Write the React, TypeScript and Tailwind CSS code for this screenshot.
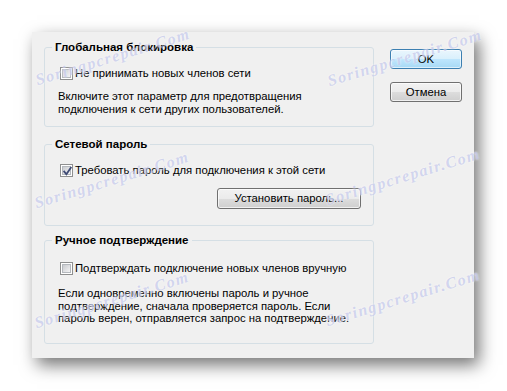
import React from "react";

const font = { fontFamily: '"Liberation Sans", Arial, sans-serif' };

function Checkbox({ checked }: { checked?: boolean }) {
  return (
    <div className="relative w-[13px] h-[13px] shrink-0 border border-[#8e8f8f] bg-white p-[1px]">
      <div className="w-full h-full bg-gradient-to-br from-[#c9cbcf] to-[#f4f4f5] border border-[#b4b8bd]" />
      {checked && (
        <svg className="absolute left-[1px] top-[1px]" width="11" height="11" viewBox="0 0 11 11">
          <path d="M2.2 5.6 L4.4 8.2 L8.8 1.8" fill="none" stroke="#3f4b75" strokeWidth="1.8" strokeLinecap="square" />
        </svg>
      )}
    </div>
  );
}

function Group({ title, className, children }: { title: string; className: string; children: React.ReactNode }) {
  return (
    <div className={"relative border border-[#d5dfe5] rounded-[3px] " + className}>
      <div className="absolute left-[7px] top-[-8px] px-[3px] bg-[#f0f0f0] font-bold text-[11.5px] leading-[14px] text-black">
        {title}
      </div>
      {children}
    </div>
  );
}

function Watermark({ x, y }: { x: number; y: number }) {
  return (
    <div
      className="absolute text-[16px] font-bold italic tracking-[1.5px] text-[rgba(170,176,226,0.5)] whitespace-nowrap pointer-events-none"
      style={{
        left: x,
        top: y,
        transform: "translate(-50%, -50%) rotate(-17deg)",
        fontFamily: '"Liberation Serif", serif',
        textShadow: "0 0 2px rgba(255,255,255,0.9)",
      }}
    >
      Soringpcrepair.Com
    </div>
  );
}

export default function App() {
  return (
    <div className="relative w-[507px] h-[391px] bg-white overflow-hidden pt-[32px] pl-[32px]" style={font}>
      <div className="w-[442px] h-[326px] bg-[#f0f0f0] shadow-[5px_7px_16px_rgba(0,0,0,0.55)] flex pt-[15px] pl-[12px] text-[11.3px] text-black">
        <div className="w-[330px] flex flex-col">
          <Group title="Глобальная блокировка" className="h-[80px] pt-[19px] pl-[15px]">
            <div className="flex items-center gap-[2px] h-[13px]">
              <Checkbox />
              <span className="leading-[13px]">Не принимать новых членов сети</span>
            </div>
            <div className="mt-[10px] ml-[-2px] leading-[12.5px]">
              Включите этот параметр для предотвращения
              <br />
              подключения к сети других пользователей.
            </div>
          </Group>
          <Group title="Сетевой пароль" className="mt-[17px] h-[82px] pt-[19px] pl-[15px]">
            <div className="flex items-center gap-[2px] h-[13px]">
              <Checkbox checked />
              <span className="leading-[13px]">Требовать пароль для подключения к этой сети</span>
            </div>
            <div className="flex justify-end pr-[12px] mt-[11px]">
              <div className="w-[144px] h-[21px] rounded-[3px] border border-[#707070] bg-[linear-gradient(#f2f2f2_0%,#ebebeb_50%,#dddddd_50%,#cfcfcf_100%)] shadow-[inset_0_0_0_1px_rgba(255,255,255,0.7)] flex items-center justify-center leading-[13px]">
                Установить пароль...
              </div>
            </div>
          </Group>
          <Group title="Ручное подтверждение" className="mt-[14px] h-[104px] pt-[21px] pl-[15px]">
            <div className="flex items-center gap-[2px] h-[13px]">
              <Checkbox />
              <span className="leading-[13px]">Подтверждать подключение новых членов вручную</span>
            </div>
            <div className="mt-[12px] ml-[-2px] leading-[12.5px]">
              Если одновременно включены пароль и ручное
              <br />
              подтверждение, сначала проверяется пароль. Если
              <br />
              пароль верен, отправляется запрос на подтверждение.
            </div>
          </Group>
        </div>
        <div className="ml-[16px] mt-[2px] w-[72px] flex flex-col gap-[13px]">
          <div className="h-[20px] rounded-[3px] border border-[#3c7fb1] bg-[linear-gradient(#eaf6fd_0%,#d9f0fc_50%,#bee6fd_50%,#a7d9f5_100%)] shadow-[inset_0_0_0_1px_rgba(255,255,255,0.6)] flex items-center justify-center leading-[13px]">
            OK
          </div>
          <div className="h-[20px] rounded-[3px] border border-[#707070] bg-[linear-gradient(#f2f2f2_0%,#ebebeb_50%,#dddddd_50%,#cfcfcf_100%)] shadow-[inset_0_0_0_1px_rgba(255,255,255,0.7)] flex items-center justify-center leading-[13px]">
            Отмена
          </div>
        </div>
      </div>
      <Watermark x={113} y={57} />
      <Watermark x={405} y={58} />
      <Watermark x={112} y={180} />
      <Watermark x={403} y={177} />
      <Watermark x={112} y={300} />
      <Watermark x={403} y={298} />
    </div>
  );
}
